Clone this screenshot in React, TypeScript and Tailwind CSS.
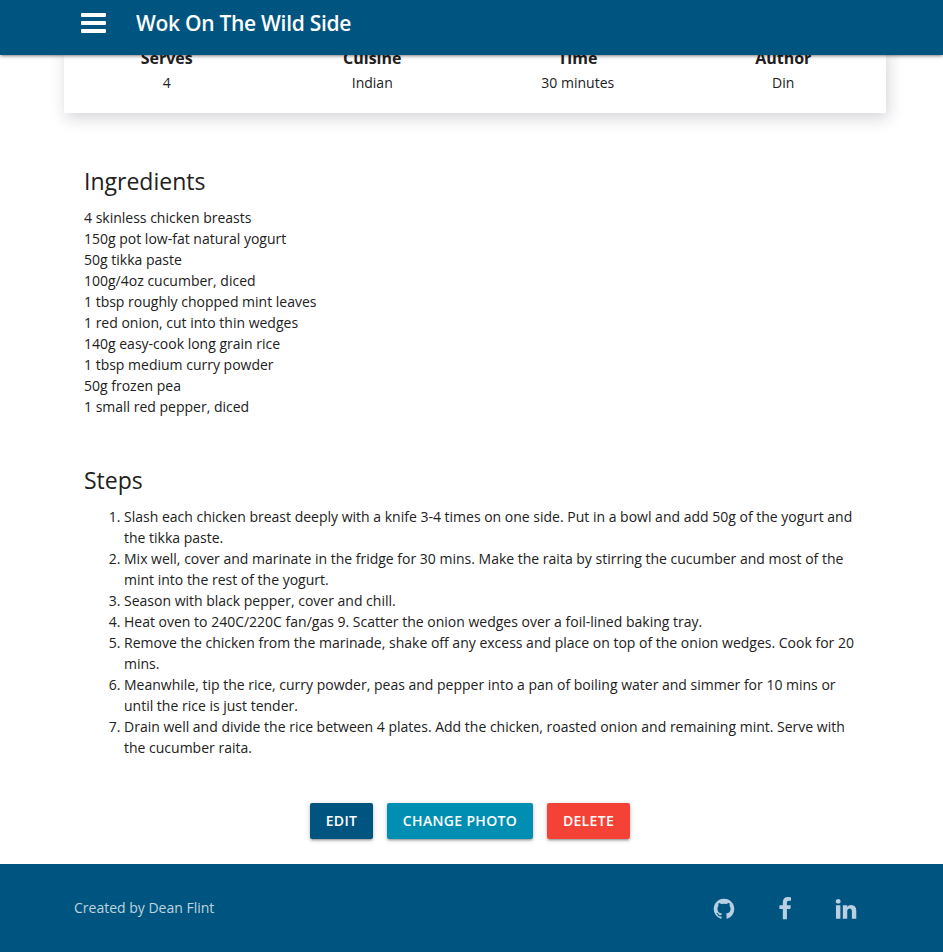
const icons = {
  github:
    'M896 128q209 0 385.5 103t279.5 279.5 103 385.5q0 251-146.5 451.5t-378.5 277.5q-27 5-40-7t-13-30q0-3 .5-76.5t.5-134.5q0-97-52-142 57-6 102.5-18t94-39 81-66.5 53-105 20.5-150.5q0-119-79-206 37-91-8-204-28-9-81 11t-92 44l-38 24q-93-26-192-26t-192 26q-16-11-42.5-27t-83.5-38.5-85-13.5q-45 113-8 204-79 87-79 206 0 85 20.5 150t52.5 105 80.5 67 94 39 102.5 18q-39 36-49 103-21 10-45 15t-57 5-65.5-21.5-55.5-62.5q-19-32-48.5-52t-49.5-24l-20-3q-21 0-29 4.5t-5 11.5 9 14 13 12l7 5q22 10 43.5 38t31.5 51l10 23q13 38 44 61.5t67 30 69.5 7 55.5-3.5l23-4q0 38 .5 88.5t.5 54.5q0 18-13 30t-40 7q-232-77-378.5-277.5t-146.5-451.5q0-209 103-385.5t279.5-279.5 385.5-103z',
  facebook:
    'M1343 12v264h-157q-86 0-116 36t-30 108v189h293l-39 296h-254v759h-306v-759h-255v-296h255v-218q0-186 104-288.5t277-102.5q147 0 228 12z',
  linkedin:
    'M477 625v991h-330v-991h330zm21-306q1 73-50.5 122t-135.5 49h-2q-82 0-132-49t-50-122q0-74 51.5-122.5t134.5-48.5 133 48.5 51 122.5zm1166 729v568h-329v-530q0-105-40.5-164.5t-126.5-59.5q-63 0-105.5 34.5t-63.5 85.5q-11 30-11 81v553h-329q2-399 2-647t-1-296l-1-48h329v144h-2q20-32 41-56t56.5-52 87-43.5 114.5-15.5q171 0 275 113.5t104 332.5z',
};

function SocialIcon({ path }: { path: string }) {
  return (
    <svg viewBox="0 0 1792 1792" className="size-6" fill="currentColor">
      <path d={path} />
    </svg>
  );
}

const facts = [
  ['Serves', '4'],
  ['Cuisine', 'Indian'],
  ['Time', '30 minutes'],
  ['Author', 'Din'],
];

const ingredients = [
  '4 skinless chicken breasts',
  '150g pot low-fat natural yogurt',
  '50g tikka paste',
  '100g/4oz cucumber, diced',
  '1 tbsp roughly chopped mint leaves',
  '1 red onion, cut into thin wedges',
  '140g easy-cook long grain rice',
  '1 tbsp medium curry powder',
  '50g frozen pea',
  '1 small red pepper, diced',
];

const steps = [
  'Slash each chicken breast deeply with a knife 3-4 times on one side. Put in a bowl and add 50g of the yogurt and the tikka paste.',
  'Mix well, cover and marinate in the fridge for 30 mins. Make the raita by stirring the cucumber and most of the mint into the rest of the yogurt.',
  'Season with black pepper, cover and chill.',
  'Heat oven to 240C/220C fan/gas 9. Scatter the onion wedges over a foil-lined baking tray.',
  'Remove the chicken from the marinade, shake off any excess and place on top of the onion wedges. Cook for 20 mins.',
  'Meanwhile, tip the rice, curry powder, peas and pepper into a pan of boiling water and simmer for 10 mins or until the rice is just tender.',
  'Drain well and divide the rice between 4 plates. Add the chicken, roasted onion and remaining mint. Serve with the cucumber raita.',
];

const btn =
  'h-9 rounded-[2px] text-sm font-semibold tracking-[0.33px] text-white uppercase shadow-[0_2px_2px_0_rgba(0,0,0,0.14),0_3px_1px_-2px_rgba(0,0,0,0.12),0_1px_5px_0_rgba(0,0,0,0.2)]';

export default function App() {
  return (
    <div className="flex h-[952px] w-[943px] flex-col overflow-hidden bg-white font-['Open_Sans',sans-serif] text-sm leading-[21px] text-[#212121]">
      <header className="relative z-10 flex h-[55px] shrink-0 items-center bg-[#005580] pb-2 pl-[81px] text-white shadow-[0_2px_2px_0_rgba(0,0,0,0.14),0_3px_1px_-2px_rgba(0,0,0,0.12),0_1px_5px_0_rgba(0,0,0,0.2)]">
        <div className="mt-[-1px] flex w-[25px] flex-col gap-1">
          <div className="h-1 rounded-[1px] bg-white" />
          <div className="h-1 rounded-[1px] bg-white" />
          <div className="h-1 rounded-[1px] bg-white" />
        </div>
        <span className="ml-[30px] text-[21px] font-semibold tracking-[-0.29px]">Wok On The Wild Side</span>
      </header>
      <section className="-mt-2 ml-16 grid h-[66px] w-[822px] shrink-0 grid-cols-4 text-center shadow-[2px_5px_15px_rgba(40,30,60,0.2)]">
        {facts.map(([label, value]) => (
          <div key={label}>
            <h3 className="text-base leading-[22px] font-bold">{label}</h3>
            <p className="mt-[3px]">{value}</p>
          </div>
        ))}
      </section>
      <main className="shrink-0 px-[84px] pt-[54px]">
        <h2 className="text-[23px] leading-[29px]">Ingredients</h2>
        <ul className="mt-[11px]">
          {ingredients.map((item) => (
            <li key={item}>{item}</li>
          ))}
        </ul>
        <h2 className="mt-[49px] text-[23px] leading-[29px]">Steps</h2>
        <ol className="mt-[11px] list-decimal pl-10">
          {steps.map((step) => (
            <li key={step}>{step}</li>
          ))}
        </ol>
      </main>
      <div className="mt-[45px] ml-[310px] flex shrink-0 gap-[14px]">
        <button className={`${btn} w-[63px] bg-[#005580]`}>Edit</button>
        <button className={`${btn} w-[146px] bg-[#008fb3]`}>Change photo</button>
        <button className={`${btn} w-[83px] bg-[#f44336]`}>Delete</button>
      </div>
      <footer className="mt-[25px] flex h-[88px] shrink-0 items-center bg-[#005580] pr-[85px] pl-[74px] text-[#bfd4df]">
        <span className="-mt-0.5 font-medium">Created by Dean Flint</span>
        <div className="mt-[2px] ml-auto flex items-center gap-[37px] text-[#b9cfe2]">
          <SocialIcon path={icons.github} />
          <SocialIcon path={icons.facebook} />
          <SocialIcon path={icons.linkedin} />
        </div>
      </footer>
    </div>
  );
}
